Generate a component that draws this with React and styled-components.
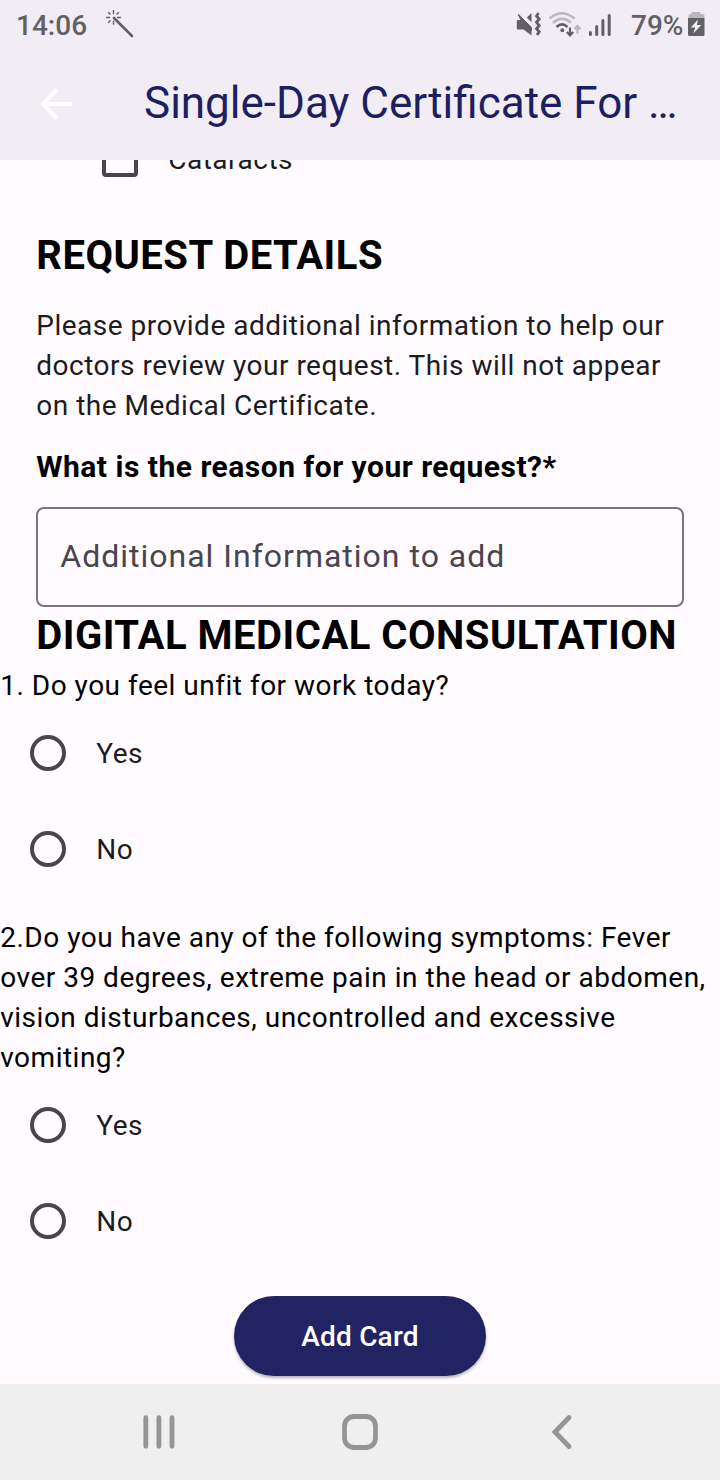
import React from "react";
import styled, { createGlobalStyle } from "styled-components";

const GlobalStyle = createGlobalStyle`
  * { box-sizing: border-box; }
  body { margin: 0; background: #fffbff; }
`;

const Screen = styled.div`
  width: 720px;
  height: 1480px;
  display: flex;
  flex-direction: column;
  overflow: hidden;
  background: #fffbff;
  color: #1c1b1f;
  font-family: Roboto, "Liberation Sans", sans-serif;
  font-size: 28px;
  line-height: 40px;
`;

const StatusBar = styled.header`
  flex: none;
  display: flex;
  align-items: center;
  height: 48px;
  padding: 4px 15px 0 16px;
  background: #f2edf5;
  color: #616064;
  font-weight: 500;
  line-height: 44px;
`;

const Clock = styled.span`
  width: 89px;
  font-size: 28px;
`;

const StatusIcons = styled.div`
  display: flex;
  align-items: center;
  margin-left: auto;
`;

const Battery = styled.span`
  width: 57px;
  margin-left: 19px;
  white-space: nowrap;
`;

const Glyph = styled.svg`
  display: block;
  flex: none;
  overflow: visible;
  margin-left: ${({ $gap = 0 }) => $gap}px;
`;

const AppBar = styled.div`
  flex: none;
  display: flex;
  align-items: center;
  height: 112px;
  padding: 0 32px 0 40px;
  background: #f2edf5;
`;

const Title = styled.h1`
  margin: 0 0 0 72px;
  padding-bottom: 2px;
  color: #1e1f62;
  font-size: 44px;
  font-weight: 400;
  line-height: 56px;
  white-space: nowrap;
`;

const Content = styled.main`
  flex: 1;
  min-height: 0;
  display: flex;
  flex-direction: column;
  overflow: hidden;
`;

const CheckRow = styled.label`
  flex: none;
  display: flex;
  align-items: center;
  gap: 30px;
  height: 96px;
  margin-top: -49px;
  padding-left: 102px;
  letter-spacing: 0.5px;
`;

const CheckMark = styled.span`
  width: 36px;
  height: 36px;
  border: 4px solid #49454f;
  border-radius: 4px;
`;

const Section = styled.section`
  flex: none;
  display: flex;
  flex-direction: column;
  padding: 0 36px;
`;

const Heading = styled.h2`
  margin: ${({ $top = 0 }) => $top}px 0 0;
  padding-left: 0.25px;
  color: #000;
  font-size: 40px;
  font-weight: 700;
  line-height: 58px;
  letter-spacing: 0.5px;
  white-space: nowrap;
`;

const Intro = styled.p`
  margin: 21px 0;
  padding-left: 0.25px;
  letter-spacing: 0.5px;
`;

const FieldLabel = styled.label`
  padding-left: 0.25px;
  color: #000;
  font-size: 30px;
  font-weight: 700;
  letter-spacing: 0.5px;
`;

const Field = styled.div`
  display: flex;
  align-items: center;
  height: 100px;
  margin-top: 20px;
  padding: 0 0 2px 22.25px;
  border: 2px solid #79747e;
  border-radius: 8px;
  color: #49454f;
  font-size: 32px;
  letter-spacing: 1px;
`;

const Question = styled.p`
  flex: none;
  margin: ${({ $top = 0 }) => $top}px 0 -1px;
  padding: 1px 0 0 0.25px;
  color: #000;
  letter-spacing: 0.5px;
`;

const RadioRow = styled.label`
  flex: none;
  display: flex;
  align-items: center;
  gap: 30px;
  height: 96px;
  padding-left: 30px;
  letter-spacing: 0.5px;
`;

const RadioMark = styled.span`
  width: 36px;
  height: 36px;
  border: 4px solid #49454f;
  border-radius: 50%;
`;

const OptionText = styled.span`
  padding: 2px 0 0 0.25px;
`;

const AddButton = styled.button`
  flex: none;
  align-self: center;
  width: 252px;
  height: 80px;
  margin: 27px 0 8px;
  padding: 1px 0 0;
  border: 0;
  border-radius: 40px;
  background: #222362;
  box-shadow: 0 2px 3px rgba(0, 0, 0, 0.3);
  color: #fff;
  font: 500 28px/40px Roboto, "Liberation Sans", sans-serif;
  letter-spacing: 0.2px;
`;

const NavBar = styled.nav`
  flex: none;
  display: flex;
  align-items: center;
  justify-content: space-between;
  height: 96px;
  padding: 0 139px;
  background: #efefef;
`;

const Choices = () =>
  ["Yes", "No"].map((label) => (
    <RadioRow key={label}>
      <RadioMark />
      <OptionText>{label}</OptionText>
    </RadioRow>
  ));

const WandIcon = () => (
  <Glyph width="30" height="30" viewBox="0 0 30 30" fill="none" stroke="#616064">
    <path d="M9 7L27 25" strokeWidth="2.600" strokeLinecap="round" />
    <path d="M8.500 -1v4.200M8.500 9.800v4M1 6.500h4M12 6.500h4M3.200 1.200l2.300 2.300M13.800 1.200l-2.300 2.300M3.200 11.800l2.300-2.300" strokeWidth="1.400" />
  </Glyph>
);

const MutedVibrateIcon = () => (
  <Glyph width="26" height="26" viewBox="0 0 26 26" fill="none">
    <path d="M2 7H6.500L15.500 16v6.500L7.500 16.500H2A1.200 1.200 0 0 1 .8 15.300V8.200A1.200 1.200 0 0 1 2 7z" fill="#616064" />
    <path d="M10.800 4.500L15.500 0v9.300z" fill="#616064" />
    <path d="M2.200 1L15.500 14.500v3L5 7.500z" fill="#616064" stroke="#616064" strokeWidth="1" />
    <path d="M22.500 0L20.500 3l2.700 3-2.700 3.300 2.700 3.200-2.700 3.300 2.700 3-2.200 3.200" stroke="#616064" strokeWidth="2.800" />
  </Glyph>
);

const WifiIcon = () => (
  <Glyph $gap={6} width="34" height="26" viewBox="0 0 34 26" fill="none">
    <path d="M1.500 5.500Q14 -5 26.500 5.500" stroke="#bab7bd" strokeWidth="2.500" />
    <path d="M5 9.700Q14 1.700 23 9.700" stroke="#bab7bd" strokeWidth="2.500" />
    <path d="M8.500 14Q14 8.800 19.500 14" stroke="#616064" strokeWidth="2.500" />
    <circle cx="14.300" cy="17.300" r="2" fill="#616064" />
    <path d="M22 14.500v7.500M18.800 19l3.200 3.300 3.200-3.300" stroke="#616064" strokeWidth="2.200" />
    <path d="M29.500 20.500V13.500M26.500 16.300l3-3.300 3 3.300" stroke="#bab7bd" strokeWidth="2.200" />
  </Glyph>
);

const SignalIcon = () => (
  <Glyph $gap={6} width="24" height="26" viewBox="0 0 24 26" stroke="#616064" strokeWidth="3" strokeLinecap="round">
    <path d="M2.400 19.500v2M8.700 13.500v8M14.900 7.500v14M21.200 2.500v19" />
  </Glyph>
);

const BatteryIcon = () => (
  <Glyph width="17" height="26" viewBox="0 1 17 26">
    <path d="M.5 6V3.500Q.5 2 2 2H3.500V1Q3.500 0 4.500 0h7q1 0 1 1V2H15q1.500 0 1.500 1.500V6z" fill="#bab7bd" />
    <path d="M0 6h16.500V22.500q0 1.500-1.500 1.500H1.500Q0 24 0 22.500z" fill="#616064" />
    <path d="M10 7.500L2.800 15.500h4.400L5.300 21.500 13.300 13H8.800z" fill="#f2edf5" />
  </Glyph>
);

const BackArrow = () => (
  <Glyph width="32" height="32" viewBox="4 4 16 16" fill="#fff">
    <path d="M20 11H7.830l5.590-5.590L12 4l-8 8 8 8 1.410-1.410L7.830 13H20v-2z" />
  </Glyph>
);

const RecentsIcon = () => (
  <Glyph width="40" height="36" viewBox="0 0 40 36" stroke="#959595" strokeWidth="4.800" strokeLinecap="round">
    <path d="M6.800 3.700v28.600M19.900 3.700v28.600M33 3.700v28.600" />
  </Glyph>
);

const HomeIcon = () => (
  <Glyph width="36" height="36" viewBox="0 0 36 36">
    <rect x="2.500" y="2.500" width="31" height="31" rx="9.500" fill="none" stroke="#959595" strokeWidth="4.800" />
  </Glyph>
);

const BackIcon = () => (
  <Glyph width="40" height="36" viewBox="0 0 40 36">
    <path d="M28 3.500L14 18l14 14.500" fill="none" stroke="#959595" strokeWidth="4.800" strokeLinecap="round" />
  </Glyph>
);

export default function App() {
  return (
    <>
      <GlobalStyle />
      <Screen>
        <StatusBar>
          <Clock>14:06</Clock>
          <WandIcon />
          <StatusIcons>
            <MutedVibrateIcon />
            <WifiIcon />
            <SignalIcon />
            <Battery>79%</Battery>
            <BatteryIcon />
          </StatusIcons>
        </StatusBar>
        <AppBar>
          <BackArrow />
          <Title>Single-Day Certificate For …</Title>
        </AppBar>
        <Content>
          <CheckRow>
            <CheckMark />
            <OptionText>Cataracts</OptionText>
          </CheckRow>
          <Section>
            <Heading $top={20}>REQUEST DETAILS</Heading>
            <Intro>
              Please provide additional information to help our doctors review your request. This
              will not appear on the Medical Certificate.
            </Intro>
            <FieldLabel>What is the reason for your request?*</FieldLabel>
            <Field>Additional Information to add</Field>
            <Heading>DIGITAL MEDICAL CONSULTATION</Heading>
          </Section>
          <Question>1. Do you feel unfit for work today?</Question>
          <Choices />
          <Question $top={20}>
            2.Do you have any of the following symptoms: Fever over 39 degrees, extreme pain in the
            head or abdomen, vision disturbances, uncontrolled and excessive vomiting?
          </Question>
          <Choices />
          <AddButton type="button">Add Card</AddButton>
        </Content>
        <NavBar>
          <RecentsIcon />
          <HomeIcon />
          <BackIcon />
        </NavBar>
      </Screen>
    </>
  );
}
